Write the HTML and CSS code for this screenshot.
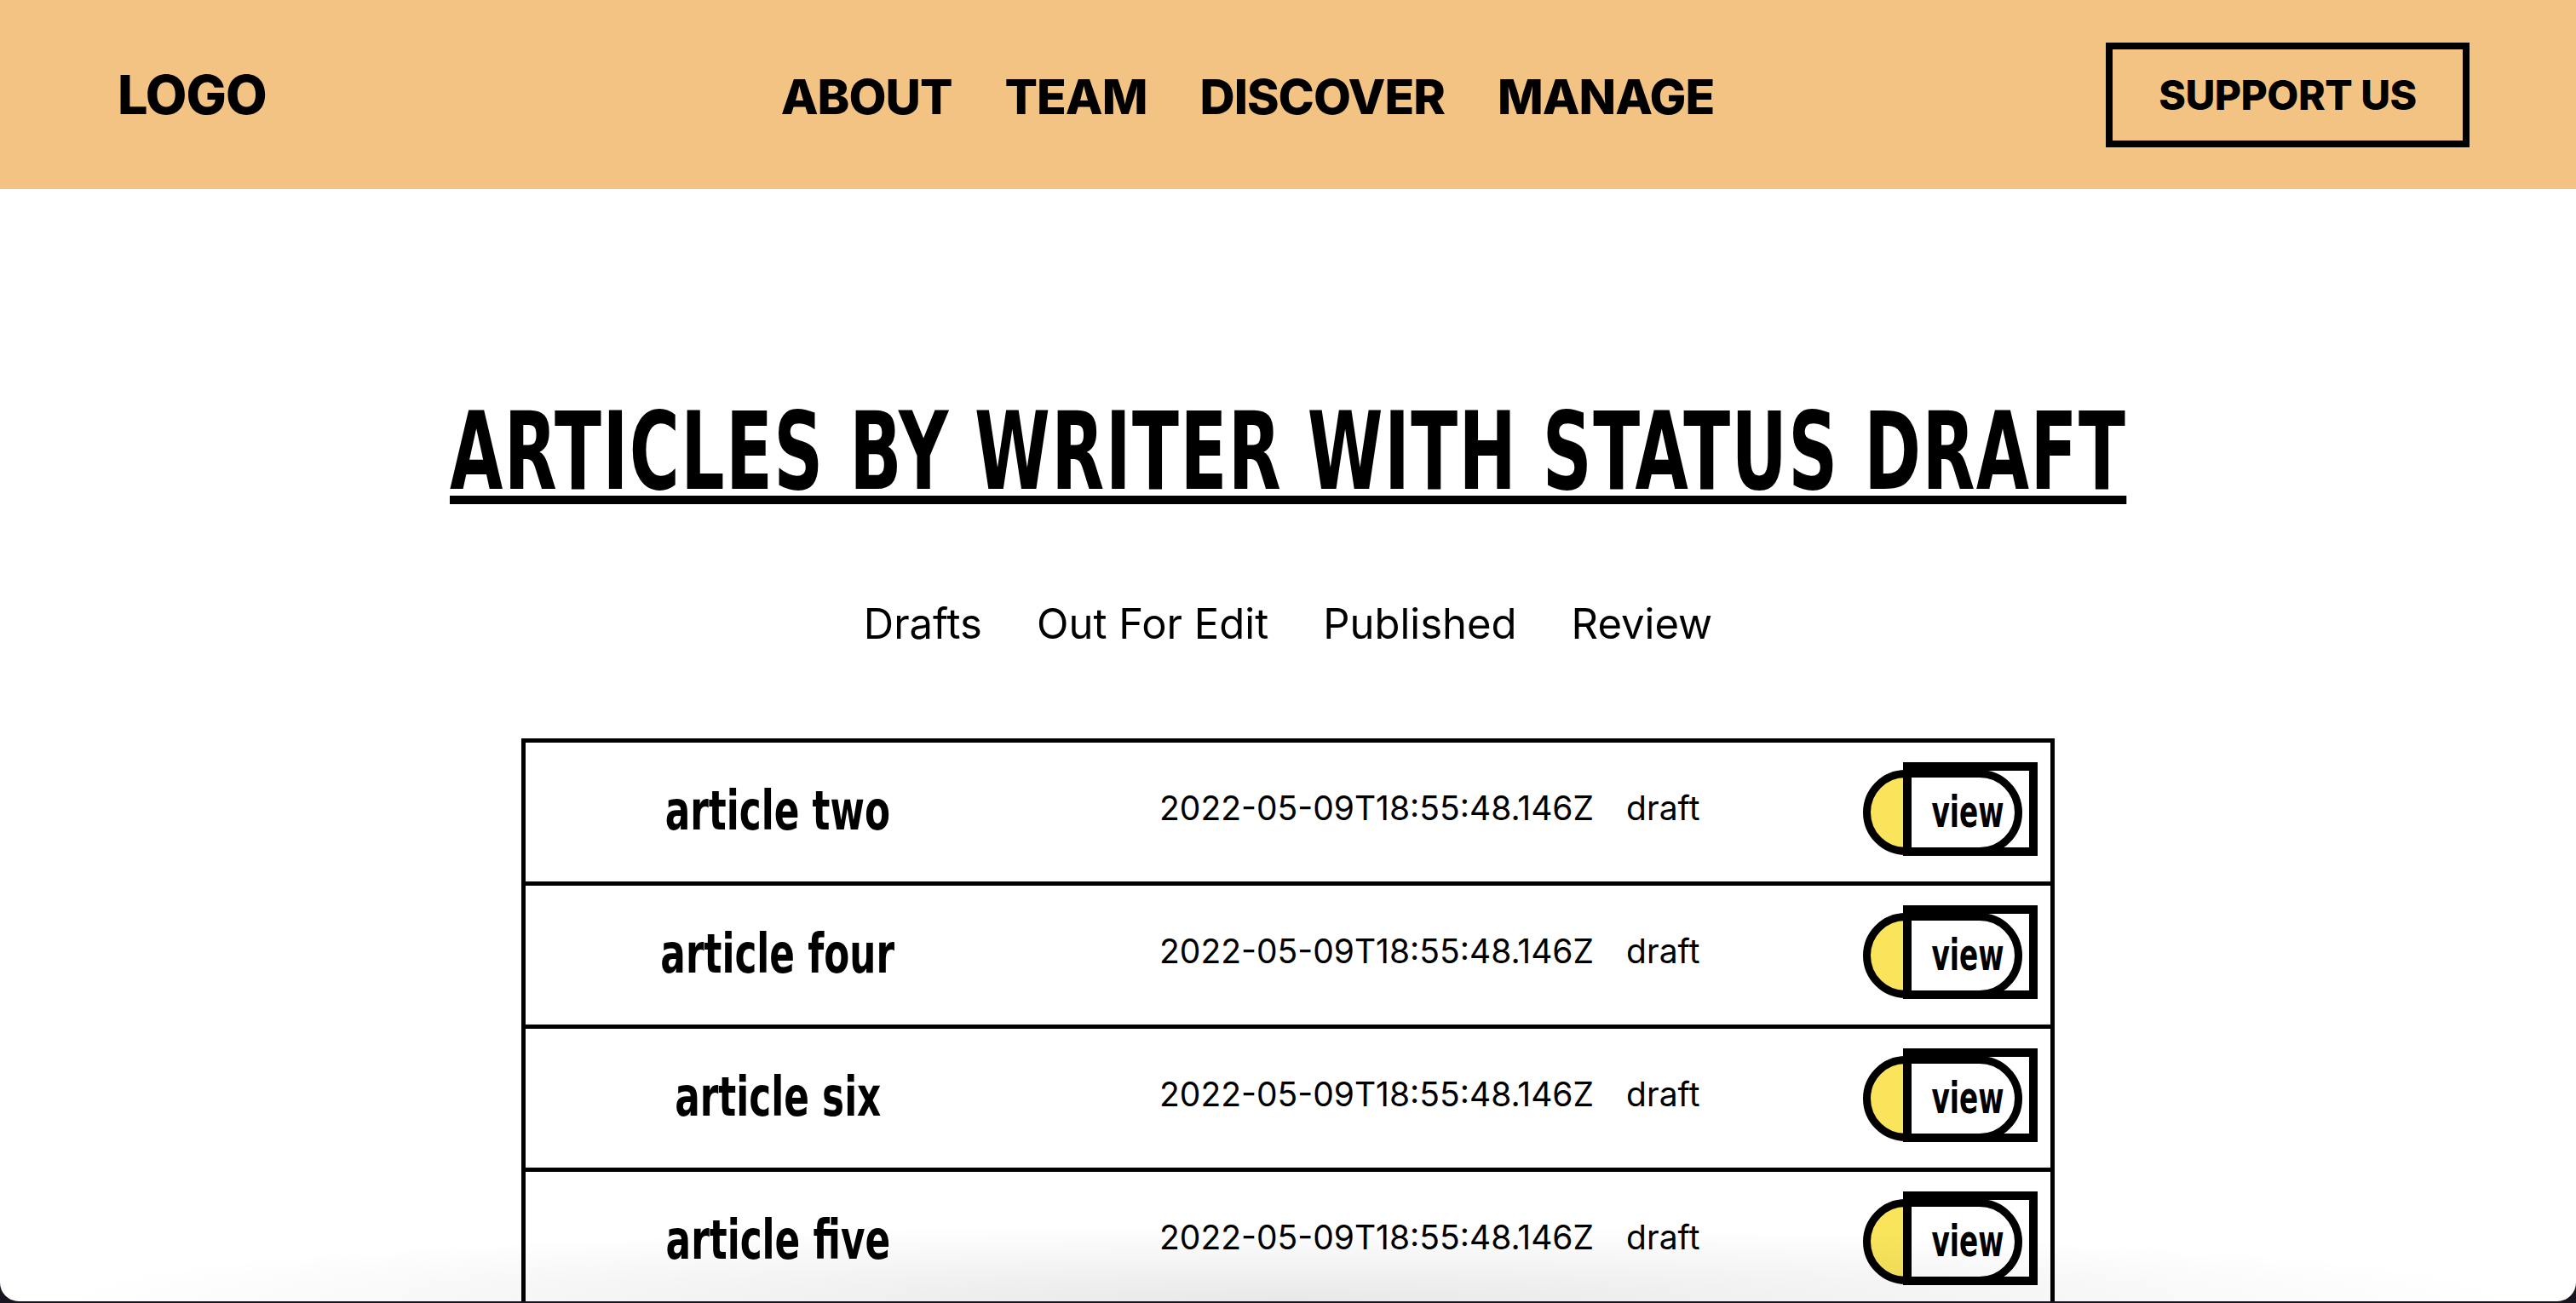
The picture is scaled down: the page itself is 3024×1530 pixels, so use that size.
FILE: index.html
```html
<!DOCTYPE html>
<html lang="en">
<head>
<meta charset="utf-8">
<title>Articles by writer</title>
<link rel="stylesheet" href="styles.css">
</head>
<body>
<div class="window">
  <header class="topbar">
    <div class="logo">LOGO</div>
    <nav class="nav">
      <a class="nav-link">ABOUT</a>
      <a class="nav-link">TEAM</a>
      <a class="nav-link">DISCOVER</a>
      <a class="nav-link">MANAGE</a>
    </nav>
    <a class="support">SUPPORT US</a>
  </header>

  <main class="content">
    <h1 class="page-title"><span class="page-title-text">ARTICLES BY WRITER WITH STATUS DRAFT</span></h1>
    <div class="tabs">
      <a class="tab">Drafts</a>
      <a class="tab">Out For Edit</a>
      <a class="tab">Published</a>
      <a class="tab">Review</a>
    </div>

    <div class="articles">
      <div class="article-row">
        <div class="article-name"><span class="article-name-text">article two</span></div>
        <div class="article-meta"><span class="article-date">2022-05-09T18:55:48.146Z</span><span class="article-status">draft</span></div>
        <a class="view-btn"><span class="view-label">view</span></a>
      </div>
      <div class="article-row">
        <div class="article-name"><span class="article-name-text">article four</span></div>
        <div class="article-meta"><span class="article-date">2022-05-09T18:55:48.146Z</span><span class="article-status">draft</span></div>
        <a class="view-btn"><span class="view-label">view</span></a>
      </div>
      <div class="article-row">
        <div class="article-name"><span class="article-name-text">article six</span></div>
        <div class="article-meta"><span class="article-date">2022-05-09T18:55:48.146Z</span><span class="article-status">draft</span></div>
        <a class="view-btn"><span class="view-label">view</span></a>
      </div>
      <div class="article-row">
        <div class="article-name"><span class="article-name-text">article five</span></div>
        <div class="article-meta"><span class="article-date">2022-05-09T18:55:48.146Z</span><span class="article-status">draft</span></div>
        <a class="view-btn"><span class="view-label">view</span></a>
      </div>
    </div>
  </main>
  <div class="bottom-shade"></div>
</div>
</body>
</html>
```

FILE: styles.css
```css
*, *::before, *::after { box-sizing: border-box; }

html, body {
  margin: 0;
  padding: 0;
  background: #1a1420;
}

body {
  width: 3024px;
  height: 1530px;
  overflow: hidden;
  font-family: Inter, "Open Sans", sans-serif;
  color: #000;
}

.window {
  position: relative;
  width: 3024px;
  height: 1528px;
  background: #fff;
  border-radius: 0 0 22px 22px;
  overflow: hidden;
}

.topbar {
  height: 222px;
  background: #f3c384;
  display: flex;
  align-items: center;
  padding: 0 125px 0 138px;
}

.logo {
  font-weight: 800;
  font-size: 63px;
  letter-spacing: -1px;
}

.nav {
  display: flex;
  gap: 62px;
  margin-left: 604px;
  margin-top: 4px;
}

.nav-link {
  font-weight: 800;
  font-size: 57px;
  letter-spacing: -1px;
}

.support {
  margin-left: auto;
  width: 427px;
  height: 123px;
  border: 8px solid #000;
  display: flex;
  align-items: center;
  justify-content: center;
  font-weight: 800;
  font-size: 48px;
  letter-spacing: -0.5px;
}

.content {
  display: flex;
  flex-direction: column;
  align-items: center;
}

.page-title {
  margin: 246px 0 0;
  font-family: "DejaVu Sans Condensed", "DejaVu Sans", sans-serif;
  font-weight: 700;
  font-size: 126px;
  line-height: 1;
  white-space: nowrap;
}

.page-title-text {
  display: inline-block;
  letter-spacing: 2px;
  text-decoration: underline;
  text-decoration-thickness: 10px;
  text-underline-offset: 8px;
  transform: scaleX(0.71);
  transform-origin: center;
}

.tabs {
  display: flex;
  gap: 64px;
  margin-top: 114px;
}

.tab {
  font-size: 49px;
  line-height: 1;
}

.articles {
  width: 1800px;
  margin-top: 110px;
  border: 5px solid #000;
  border-bottom: none;
}

.article-row {
  height: 168px;
  border-bottom: 5px solid #000;
  display: grid;
  grid-template-columns: 592px 1fr auto;
  align-items: center;
  padding-right: 33px;
}

.article-name {
  text-align: center;
  font-family: "DejaVu Sans Condensed", "DejaVu Sans", sans-serif;
  font-weight: 700;
  font-size: 64px;
  margin-top: -4px;
  white-space: nowrap;
}

.article-name-text {
  display: inline-block;
  transform: scaleX(0.76);
  transform-origin: center;
}

.article-meta {
  padding-left: 152px;
  font-size: 39px;
  display: flex;
  gap: 38px;
  margin-top: -10px;
}

.view-btn {
  position: relative;
  width: 187px;
  height: 100px;
  border: 9px solid #000;
  border-radius: 50px;
  background: linear-gradient(90deg, #f9e45c 0 48px, #fff 48px);
  display: flex;
  align-items: center;
  justify-content: flex-end;
  padding-right: 13px;
}

.view-btn::after {
  content: "";
  position: absolute;
  left: 38px;
  top: -18px;
  width: 158px;
  height: 110px;
  border: 10px solid #000;
}

.view-label {
  display: inline-block;
  font-family: "DejaVu Sans Condensed", "DejaVu Sans", sans-serif;
  font-weight: 700;
  font-size: 52px;
  line-height: 1;
  transform: scaleX(0.7);
  transform-origin: right center;
  margin-top: -2px;
}

.bottom-shade {
  position: absolute;
  left: 0;
  right: 0;
  bottom: 0;
  height: 90px;
  background: radial-gradient(ellipse 48% 100% at 50% 100%, rgba(0,0,0,0.09), rgba(0,0,0,0) 100%);
  pointer-events: none;
}
```
